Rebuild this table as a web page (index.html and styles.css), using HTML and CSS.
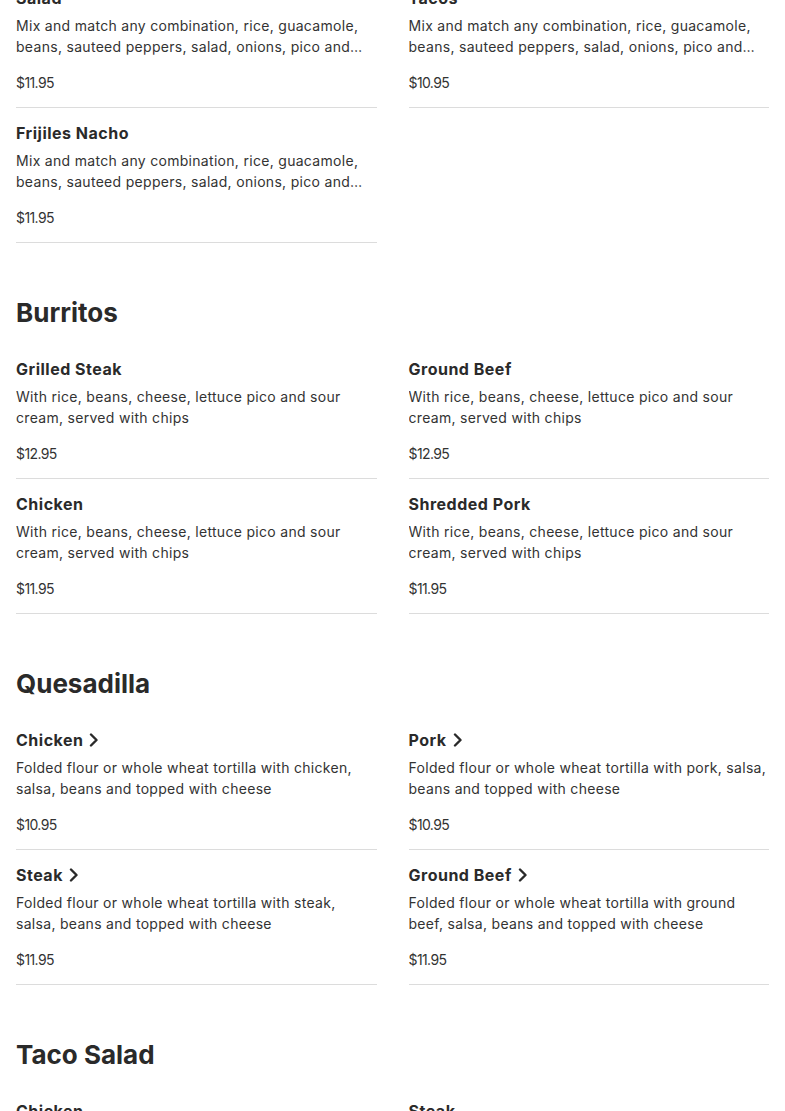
FILE: index.html
```html
<!DOCTYPE html>
<html lang="en">
<head>
<meta charset="utf-8">
<title>Menu</title>
<link rel="stylesheet" href="styles.css">
</head>
<body>
<main class="menu">
  <section class="section section--first">
    <div class="grid">
      <article class="item">
        <h3 class="item-title">Salad</h3>
        <p class="item-desc">Mix and match any combination, rice, guacamole, beans, sauteed peppers, salad, onions, pico and sour cream, served with chips</p>
        <p class="item-price">$11.95</p>
      </article>
      <article class="item">
        <h3 class="item-title">Tacos</h3>
        <p class="item-desc">Mix and match any combination, rice, guacamole, beans, sauteed peppers, salad, onions, pico and sour cream, served with chips</p>
        <p class="item-price">$10.95</p>
      </article>
      <article class="item">
        <h3 class="item-title">Frijiles Nacho</h3>
        <p class="item-desc">Mix and match any combination, rice, guacamole, beans, sauteed peppers, salad, onions, pico and sour cream, served with chips</p>
        <p class="item-price">$11.95</p>
      </article>
    </div>
  </section>

  <section class="section">
    <h2 class="section-title">Burritos</h2>
    <div class="grid">
      <article class="item">
        <h3 class="item-title">Grilled Steak</h3>
        <p class="item-desc">With rice, beans, cheese, lettuce pico and sour cream, served with chips</p>
        <p class="item-price">$12.95</p>
      </article>
      <article class="item">
        <h3 class="item-title">Ground Beef</h3>
        <p class="item-desc">With rice, beans, cheese, lettuce pico and sour cream, served with chips</p>
        <p class="item-price">$12.95</p>
      </article>
      <article class="item">
        <h3 class="item-title">Chicken</h3>
        <p class="item-desc">With rice, beans, cheese, lettuce pico and sour cream, served with chips</p>
        <p class="item-price">$11.95</p>
      </article>
      <article class="item">
        <h3 class="item-title">Shredded Pork</h3>
        <p class="item-desc">With rice, beans, cheese, lettuce pico and sour cream, served with chips</p>
        <p class="item-price">$11.95</p>
      </article>
    </div>
  </section>

  <section class="section">
    <h2 class="section-title">Quesadilla</h2>
    <div class="grid">
      <article class="item">
        <h3 class="item-title">Chicken <svg class="chev" viewBox="0 0 10 14" aria-hidden="true"><path d="M2 1.5 L7.5 7 L2 12.5"/></svg></h3>
        <p class="item-desc">Folded flour or whole wheat tortilla with chicken, salsa, beans and topped with cheese</p>
        <p class="item-price">$10.95</p>
      </article>
      <article class="item">
        <h3 class="item-title">Pork <svg class="chev" viewBox="0 0 10 14" aria-hidden="true"><path d="M2 1.5 L7.5 7 L2 12.5"/></svg></h3>
        <p class="item-desc">Folded flour or whole wheat tortilla with pork, salsa, beans and topped with cheese</p>
        <p class="item-price">$10.95</p>
      </article>
      <article class="item">
        <h3 class="item-title">Steak <svg class="chev" viewBox="0 0 10 14" aria-hidden="true"><path d="M2 1.5 L7.5 7 L2 12.5"/></svg></h3>
        <p class="item-desc">Folded flour or whole wheat tortilla with steak, salsa, beans and topped with cheese</p>
        <p class="item-price">$11.95</p>
      </article>
      <article class="item">
        <h3 class="item-title">Ground Beef <svg class="chev" viewBox="0 0 10 14" aria-hidden="true"><path d="M2 1.5 L7.5 7 L2 12.5"/></svg></h3>
        <p class="item-desc">Folded flour or whole wheat tortilla with ground beef, salsa, beans and topped with cheese</p>
        <p class="item-price">$11.95</p>
      </article>
    </div>
  </section>

  <section class="section">
    <h2 class="section-title">Taco Salad</h2>
    <div class="grid">
      <article class="item">
        <h3 class="item-title">Chicken</h3>
        <p class="item-desc">Mix and match any combination, rice, guacamole, beans, sauteed peppers, salad, onions, pico and sour cream</p>
        <p class="item-price">$11.95</p>
      </article>
      <article class="item">
        <h3 class="item-title">Steak</h3>
        <p class="item-desc">Mix and match any combination, rice, guacamole, beans, sauteed peppers, salad, onions, pico and sour cream</p>
        <p class="item-price">$11.95</p>
      </article>
    </div>
  </section>
</main>
</body>
</html>
```
FILE: styles.css
```css
html, body {
  margin: 0;
  padding: 0;
  background: #ffffff;
}

body {
  font-family: "Inter", "Liberation Sans", sans-serif;
  color: #2a2a2a;
  overflow: hidden;
}

.menu {
  padding: 0 16px;
  margin-top: -27px;
}

.section {
  margin-top: 50px;
}

.section--first {
  margin-top: 0;
}

.section-title {
  margin: 0 0 12px;
  font-size: 26px;
  line-height: 39px;
  font-weight: 700;
  color: #2a2a2a;
}

.grid {
  display: grid;
  grid-template-columns: 1fr 1fr;
  column-gap: 32px;
}

.item {
  padding: 13px 0 14px;
  border-bottom: 1px solid #dcdcdc;
}

.item-title {
  margin: 0 0 5px;
  font-size: 16px;
  line-height: 24px;
  font-weight: 700;
  letter-spacing: 0.5px;
  color: #2a2a2a;
  display: flex;
  align-items: center;
  gap: 6px;
}

.chev {
  width: 10px;
  height: 14px;
  fill: none;
  stroke: #2a2a2a;
  stroke-width: 2.4;
  stroke-linecap: round;
  stroke-linejoin: round;
}

.item-desc {
  margin: 0;
  font-size: 14px;
  line-height: 21px;
  letter-spacing: 0.3px;
  color: #333333;
  display: -webkit-box;
  -webkit-line-clamp: 2;
  -webkit-box-orient: vertical;
  overflow: hidden;
}

.item-price {
  margin: 15px 0 0;
  font-size: 14px;
  line-height: 21px;
  color: #333333;
  letter-spacing: -0.6px;
}
```
